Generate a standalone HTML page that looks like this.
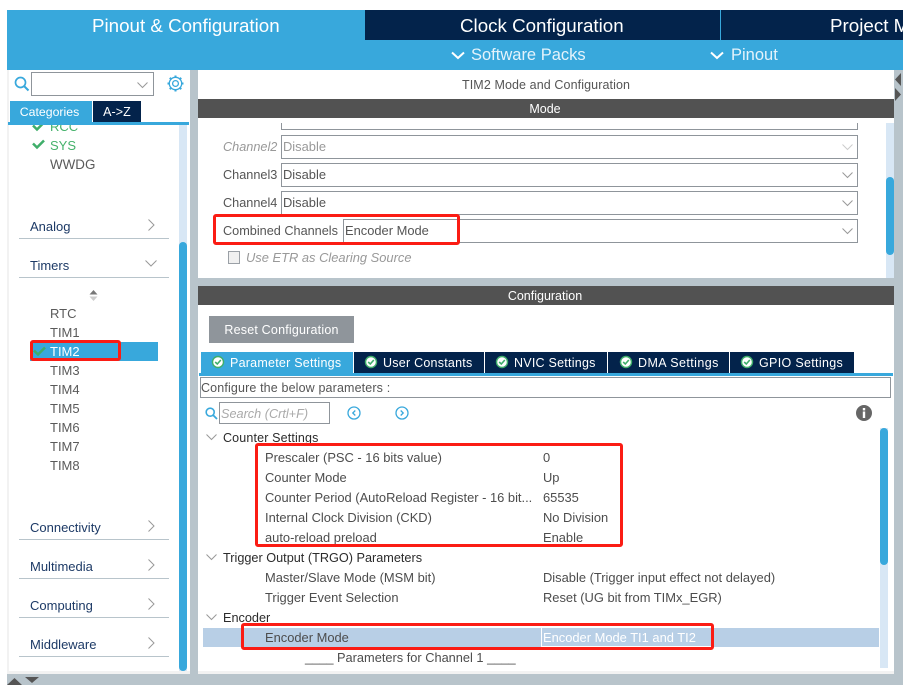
<!DOCTYPE html>
<html><head><meta charset="utf-8">
<style>
html,body{margin:0;padding:0;background:#fff;width:903px;height:685px;overflow:hidden}
body{position:relative;font-family:"Liberation Sans",sans-serif;font-size:12.7px;color:#555}
.a{position:absolute}
.t{position:absolute;line-height:20px;height:20px;white-space:nowrap;margin-top:1px}
.h{margin-top:0}
.m{color:#1d3a66;font-size:13px}
.i{color:#5a5a5a;font-size:13px}
.s{position:absolute;box-sizing:border-box;border:1px solid #8f959b;background:#fff;left:281px;width:577px;height:24px}
.l{position:absolute;left:19px;width:150px;height:1px;background:#b8c4cb}
.r{position:absolute;box-sizing:border-box;border:3px solid #fb1c14;border-radius:3px}
.tb{position:absolute;top:352px;height:21px;background:#03234b;color:#fff;line-height:23px;font-size:12.5px;letter-spacing:.24px;white-space:nowrap;box-sizing:border-box}
.p{color:#4d4d4d;font-size:12.9px}
.g{color:#2b2b2b}
svg{position:absolute;overflow:visible}
</style></head><body>
<div class="a" style="left:7px;top:10px;width:896px;height:675px;background:#b8c4cb"></div>
<div class="a" style="left:7px;top:10px;width:896px;height:60px;background:#38a8dc"></div>
<div class="a" style="left:365px;top:10px;width:355px;height:30px;background:#03234b"></div>
<div class="a" style="left:721px;top:10px;width:182px;height:30px;background:#03234b;overflow:hidden"><div class="t h" style="left:109px;top:6px;color:#fff;font-size:18.8px;width:73px;overflow:hidden">Project Manager</div></div>
<div class="t h" style="left:92px;top:16px;color:#fff;font-size:18.75px">Pinout &amp; Configuration</div>
<div class="t h" style="left:460px;top:16px;color:#fff;font-size:18.75px">Clock Configuration</div>
<svg style="left:451px;top:51px" width="14" height="9"><path d="M1 1.500L7 7L13 1.500" fill="none" stroke="#fff" stroke-width="2"/></svg>
<div class="t h" style="left:471px;top:45px;color:#e4f3fb;font-size:16.5px">Software Packs</div>
<svg style="left:710px;top:51px" width="14" height="9"><path d="M1 1.500L7 7L13 1.500" fill="none" stroke="#fff" stroke-width="2"/></svg>
<div class="t h" style="left:731px;top:45px;color:#e4f3fb;font-size:16.5px">Pinout</div>

<!-- left panel -->
<div class="a" style="left:7px;top:70px;width:183px;height:604px;background:#f2f2f2"></div>
<div class="a" style="left:9px;top:70px;width:181px;height:601px;background:#fff"></div>
<svg style="left:14px;top:76px" width="16" height="16"><circle cx="6.500" cy="6.500" r="5" fill="none" stroke="#38a8dc" stroke-width="1.700"/><path d="M10 10L14.500 14.500" stroke="#38a8dc" stroke-width="2"/></svg>
<div class="a" style="left:31px;top:72px;width:123px;height:24px;box-sizing:border-box;border:1px solid #8f959b"></div>
<svg style="left:137px;top:82px" width="11" height="7"><path d="M.5 .5L5.500 5.500L10.500 .5" fill="none" stroke="#999" stroke-width="1"/></svg>
<svg style="left:167px;top:75px" width="17" height="17" viewBox="0 0 17 17"><circle cx="8.500" cy="8.500" r="6.200" fill="none" stroke="#38a8dc" stroke-width="1.300"/><circle cx="8.500" cy="8.500" r="2.900" fill="none" stroke="#38a8dc" stroke-width="1.300"/><path d="M8.500 .5V3M8.500 14V16.500M.5 8.500H3M14 8.500H16.500M2.800 2.800L4.500 4.500M12.500 12.500L14.200 14.200M14.200 2.800L12.500 4.500M4.500 12.500L2.800 14.200" stroke="#38a8dc" stroke-width="2"/></svg>
<div class="a" style="left:10px;top:101px;width:82px;height:21px;background:#38a8dc;color:#fff;font-size:12.300px;line-height:23px;text-align:center;box-sizing:border-box;padding-right:3px">Categories</div>
<div class="a" style="left:93px;top:101px;width:48px;height:21px;background:#03234b;color:#fff;font-size:12.500px;line-height:23px;text-align:center;letter-spacing:.1px">A-&gt;Z</div>
<div class="a" style="left:8px;top:122px;width:181px;height:3px;background:#38a8dc"></div>
<div class="a" style="left:179px;top:125px;width:8px;height:546px;background:#d8e7f5"></div>
<div class="a" style="left:179px;top:242px;width:8px;height:429px;background:#38a8dc;border-radius:4px"></div>

<div class="a" style="left:9px;top:125px;width:170px;height:15px;overflow:hidden">
<div class="t" style="left:41px;top:-9px;color:#45b26b;font-size:13px">RCC</div>
<svg style="left:23px;top:-4px" width="13" height="10"><path d="M1 4.500L5 8.500L12 1.500" fill="none" stroke="#3fae6a" stroke-width="2.500"/></svg>
</div>
<svg style="left:32px;top:139px" width="13" height="10"><path d="M1 4.500L5 8.500L12 1.500" fill="none" stroke="#3fae6a" stroke-width="2.500"/></svg>
<div class="t" style="left:50px;top:135px;color:#45b26b;font-size:13px">SYS</div>
<div class="t i" style="left:50px;top:154px;font-size:13.400px">WWDG</div>

<div class="t m" style="left:30px;top:216px">Analog</div><div class="l" style="top:238px"></div>
<svg style="left:148px;top:219px" width="7" height="12"><path d="M.5 .5L6 6L.5 11.500" fill="none" stroke="#999"/></svg>
<div class="t m" style="left:30px;top:255px">Timers</div><div class="l" style="top:277px"></div>
<svg style="left:145px;top:260px" width="12" height="7"><path d="M.5 .5L6 6L11.500 .5" fill="none" stroke="#999"/></svg>
<svg style="left:89px;top:290px" width="9" height="11"><path d="M4.500 0L8.500 4.500H.5Z" fill="#777"/><path d="M4.500 11L8.500 6.500H.5Z" fill="#ccc"/></svg>
<div class="t i" style="left:50px;top:303px">RTC</div>
<div class="t i" style="left:50px;top:322px">TIM1</div>
<div class="a" style="left:30px;top:342px;width:128px;height:19px;background:#38a8dc"></div>
<svg style="left:33px;top:346px" width="13" height="10"><path d="M1 4.500L5 8.500L12 1.500" fill="none" stroke="#3fae6a" stroke-width="2.500"/></svg>
<div class="t" style="left:50px;top:341px;color:#fff;font-size:13px">TIM2</div>
<div class="t i" style="left:50px;top:360px">TIM3</div>
<div class="t i" style="left:50px;top:379px">TIM4</div>
<div class="t i" style="left:50px;top:398px">TIM5</div>
<div class="t i" style="left:50px;top:417px">TIM6</div>
<div class="t i" style="left:50px;top:436px">TIM7</div>
<div class="t i" style="left:50px;top:455px">TIM8</div>
<div class="t m" style="left:30px;top:517px">Connectivity</div><div class="l" style="top:539px"></div>
<svg style="left:148px;top:520px" width="7" height="12"><path d="M.5 .5L6 6L.5 11.500" fill="none" stroke="#999"/></svg>
<div class="t m" style="left:30px;top:556px">Multimedia</div><div class="l" style="top:578px"></div>
<svg style="left:148px;top:559px" width="7" height="12"><path d="M.5 .5L6 6L.5 11.500" fill="none" stroke="#999"/></svg>
<div class="t m" style="left:30px;top:595px">Computing</div><div class="l" style="top:617px"></div>
<svg style="left:148px;top:598px" width="7" height="12"><path d="M.5 .5L6 6L.5 11.500" fill="none" stroke="#999"/></svg>
<div class="t m" style="left:30px;top:634px">Middleware</div><div class="l" style="top:656px"></div>
<svg style="left:148px;top:637px" width="7" height="12"><path d="M.5 .5L6 6L.5 11.500" fill="none" stroke="#999"/></svg>
<svg style="left:7px;top:677px" width="32" height="8"><path d="M0 8L7.500 1L15 8Z" fill="#555"/><path d="M18 0H32L25 6Z" fill="#555"/></svg>

<!-- top right panel -->
<div class="a" style="left:198px;top:70px;width:696px;height:208px;background:#fff"></div>
<svg style="left:895px;top:73px" width="7" height="28"><path d="M6 0V13L0 6.500Z" fill="#555"/><path d="M0 15V28L6 21.500Z" fill="#555"/></svg>
<div class="t" style="left:462px;top:74px;font-size:12.500px;letter-spacing:.1px">TIM2 Mode and Configuration</div>
<div class="a" style="left:198px;top:99px;width:696px;height:19px;background:#525252;color:#fff;font-size:12.500px;line-height:21px;text-align:center;padding-right:2px;box-sizing:border-box">Mode</div>
<div class="a" style="left:886px;top:123px;width:8px;height:155px;background:#d8e7f5"></div>
<div class="a" style="left:886px;top:177px;width:8px;height:78px;background:#38a8dc;border-radius:4px"></div>
<div class="a" style="left:281px;top:123px;width:577px;height:7px;box-sizing:border-box;border:1px solid #8f959b;border-top:0"></div>

<div class="t" style="left:223px;top:136px;color:#999;font-style:italic">Channel2</div>
<div class="s" style="top:135px"></div><div class="t" style="left:283px;top:136px;color:#999;font-size:12.900px">Disable</div>
<svg style="left:842px;top:144px" width="11" height="7"><path d="M.5 .5L5.500 5.500L10.500 .5" fill="none" stroke="#ccc"/></svg>
<div class="t" style="left:223px;top:164px">Channel3</div>
<div class="s" style="top:163px"></div><div class="t" style="left:283px;top:164px;font-size:12.900px">Disable</div>
<svg style="left:842px;top:172px" width="11" height="7"><path d="M.5 .5L5.500 5.500L10.500 .5" fill="none" stroke="#999"/></svg>
<div class="t" style="left:223px;top:192px">Channel4</div>
<div class="s" style="top:191px"></div><div class="t" style="left:283px;top:192px;font-size:12.900px">Disable</div>
<svg style="left:842px;top:200px" width="11" height="7"><path d="M.5 .5L5.500 5.500L10.500 .5" fill="none" stroke="#999"/></svg>
<div class="t" style="left:223px;top:220px">Combined Channels</div>
<div class="s" style="top:219px;left:343px;width:515px"></div><div class="t" style="left:345px;top:220px;font-size:12.900px">Encoder Mode</div>
<svg style="left:842px;top:228px" width="11" height="7"><path d="M.5 .5L5.500 5.500L10.500 .5" fill="none" stroke="#999"/></svg>
<div class="a" style="left:228px;top:251px;width:12px;height:13px;box-sizing:border-box;border:1px solid #9aa0a6;background:#f0f0f0"></div>
<div class="t" style="left:246px;top:247px;color:#999;font-style:italic;font-size:12.900px">Use ETR as Clearing Source</div>

<!-- bottom right panel -->
<div class="a" style="left:198px;top:286px;width:696px;height:388px;background:#f2f2f2"></div>
<div class="a" style="left:198px;top:286px;width:692px;height:385px;background:#fff"></div>
<div class="a" style="left:890px;top:305px;width:4px;height:366px;background:#fff"></div>
<div class="a" style="left:198px;top:286px;width:696px;height:19px;background:#525252;color:#fff;font-size:12.500px;line-height:21px;text-align:center;padding-right:2px;box-sizing:border-box">Configuration</div>
<div class="a" style="left:209px;top:316px;width:145px;height:27px;background:#8f959b;color:#fff;font-size:12.500px;line-height:29px;text-align:center;letter-spacing:.2px">Reset Configuration</div>

<div class="tb" style="left:201px;width:152px;background:#38a8dc;padding-left:29px">Parameter Settings</div>
<div class="tb" style="left:354px;width:130px;padding-left:29px">User Constants</div>
<div class="tb" style="left:485px;width:122px;padding-left:29px">NVIC Settings</div>
<div class="tb" style="left:608px;width:121px;padding-left:30px;letter-spacing:.42px">DMA Settings</div>
<div class="tb" style="left:730px;width:124px;padding-left:29px;letter-spacing:.32px">GPIO Settings</div>
<svg style="left:212px;top:356px" width="12" height="12"><circle cx="6" cy="6" r="5.500" fill="#fff" stroke="#3fae6a" stroke-width="1.400"/><path d="M3.200 6L5.300 8L8.800 4" fill="none" stroke="#3fae6a" stroke-width="1.600"/></svg>
<svg style="left:365px;top:356px" width="12" height="12"><circle cx="6" cy="6" r="5.500" fill="#fff" stroke="#3fae6a" stroke-width="1.400"/><path d="M3.200 6L5.300 8L8.800 4" fill="none" stroke="#3fae6a" stroke-width="1.600"/></svg>
<svg style="left:496px;top:356px" width="12" height="12"><circle cx="6" cy="6" r="5.500" fill="#fff" stroke="#3fae6a" stroke-width="1.400"/><path d="M3.200 6L5.300 8L8.800 4" fill="none" stroke="#3fae6a" stroke-width="1.600"/></svg>
<svg style="left:620px;top:356px" width="12" height="12"><circle cx="6" cy="6" r="5.500" fill="#fff" stroke="#3fae6a" stroke-width="1.400"/><path d="M3.200 6L5.300 8L8.800 4" fill="none" stroke="#3fae6a" stroke-width="1.600"/></svg>
<svg style="left:741px;top:356px" width="12" height="12"><circle cx="6" cy="6" r="5.500" fill="#fff" stroke="#3fae6a" stroke-width="1.400"/><path d="M3.200 6L5.300 8L8.800 4" fill="none" stroke="#3fae6a" stroke-width="1.600"/></svg>
<div class="a" style="left:199px;top:373px;width:694px;height:3px;background:#38a8dc"></div>
<div class="a" style="left:200px;top:377px;width:691px;height:21px;box-sizing:border-box;border:1px solid #8f959b"></div>
<div class="t" style="left:201px;top:377px;font-size:12.500px;letter-spacing:.14px">Configure the below parameters :</div>
<svg style="left:205px;top:407px" width="13" height="13"><circle cx="5.200" cy="5.200" r="4" fill="none" stroke="#38a8dc" stroke-width="1.600"/><path d="M8 8L12 12" stroke="#38a8dc" stroke-width="1.800"/></svg>
<div class="a" style="left:219px;top:402px;width:111px;height:22px;box-sizing:border-box;border:1px solid #8f959b"></div>
<div class="t" style="left:221px;top:403px;color:#aaa;font-style:italic">Search (Crtl+F)</div>
<svg style="left:347px;top:406px" width="14" height="14"><circle cx="7" cy="7" r="6" fill="none" stroke="#38a8dc" stroke-width="1.300"/><path d="M8.300 4.500L5.800 7L8.300 9.500" fill="none" stroke="#38a8dc" stroke-width="1.300"/></svg>
<svg style="left:395px;top:406px" width="14" height="14"><circle cx="7" cy="7" r="6" fill="none" stroke="#38a8dc" stroke-width="1.300"/><path d="M5.700 4.500L8.200 7L5.700 9.500" fill="none" stroke="#38a8dc" stroke-width="1.300"/></svg>
<svg style="left:856px;top:405px" width="16" height="16"><circle cx="8" cy="8" r="8" fill="#666"/><rect x="6.800" y="3" width="2.400" height="2.400" fill="#fff"/><rect x="6.800" y="6.500" width="2.400" height="6.500" fill="#fff"/></svg>
<div class="a" style="left:880px;top:428px;width:8px;height:240px;background:#d8e7f5"></div>
<div class="a" style="left:880px;top:428px;width:8px;height:137px;background:#38a8dc;border-radius:4px"></div>

<div class="a" style="left:203px;top:628px;width:676px;height:19px;background:#b8cfe6"></div>
<div class="a" style="left:541px;top:628px;width:1px;height:19px;background:#fff"></div>
<div class="a" style="left:542px;top:646px;width:170px;height:1px;background:#fff"></div>

<svg style="left:206px;top:434px" width="11" height="6"><path d="M.5 .5L5.500 5.500L10.500 .5" fill="none" stroke="#999"/></svg>
<div class="t g" style="left:223px;top:427px;font-size:12.500px;letter-spacing:.15px">Counter Settings</div>
<div class="t p" style="left:265px;top:447px">Prescaler (PSC - 16 bits value)</div><div class="t p" style="left:543px;top:447px">0</div>
<div class="t p" style="left:265px;top:467px">Counter Mode</div><div class="t p" style="left:543px;top:467px">Up</div>
<div class="t p" style="left:265px;top:487px">Counter Period (AutoReload Register - 16 bit...</div><div class="t p" style="left:543px;top:487px">65535</div>
<div class="t p" style="left:265px;top:507px">Internal Clock Division (CKD)</div><div class="t p" style="left:543px;top:507px">No Division</div>
<div class="t p" style="left:265px;top:527px">auto-reload preload</div><div class="t p" style="left:543px;top:527px">Enable</div>
<svg style="left:206px;top:554px" width="11" height="6"><path d="M.5 .5L5.500 5.500L10.500 .5" fill="none" stroke="#999"/></svg>
<div class="t g" style="left:223px;top:547px">Trigger Output (TRGO) Parameters</div>
<div class="t p" style="left:265px;top:567px">Master/Slave Mode (MSM bit)</div><div class="t p" style="left:543px;top:567px">Disable (Trigger input effect not delayed)</div>
<div class="t p" style="left:265px;top:587px">Trigger Event Selection</div><div class="t p" style="left:543px;top:587px">Reset (UG bit from TIMx_EGR)</div>
<svg style="left:206px;top:614px" width="11" height="6"><path d="M.5 .5L5.500 5.500L10.500 .5" fill="none" stroke="#999"/></svg>
<div class="t g" style="left:223px;top:607px">Encoder</div>
<div class="t p" style="left:265px;top:627px">Encoder Mode</div><div class="t" style="left:543px;top:627px;color:#fff;font-size:12.900px">Encoder Mode TI1 and TI2</div>
<div class="t p" style="left:305px;top:647px;font-size:12.800px">____ Parameters for Channel 1 ____</div>

<!-- red annotation boxes -->
<div class="r" style="left:213px;top:214px;width:247px;height:31px"></div>
<div class="r" style="left:30px;top:340px;width:91px;height:21px"></div>
<div class="r" style="left:255px;top:443px;width:368px;height:104px"></div>
<div class="r" style="left:241px;top:623px;width:473px;height:27px"></div>
</body></html>
